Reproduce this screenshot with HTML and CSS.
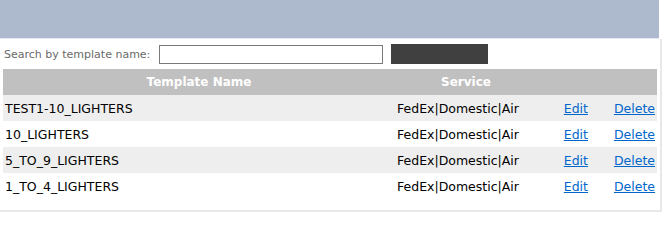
FILE: index.html
```html
<!DOCTYPE html>
<html>
<head>
<meta charset="utf-8">
<link rel="stylesheet" href="styles.css">
</head>
<body>
<div class="topbar"></div>
<div class="panel">
  <div class="search">
    <label class="search-label" for="q">Search by template name:</label>
    <input class="search-input" id="q" type="text">
    <button class="search-btn" type="button"></button>
  </div>
  <table class="grid">
    <thead>
      <tr>
        <th class="c-name">Template Name</th>
        <th class="c-svc">Service</th>
        <th class="c-edit"></th>
        <th class="c-del"></th>
      </tr>
    </thead>
    <tbody>
      <tr class="alt"><td>TEST1-10_LIGHTERS</td><td>FedEx|Domestic|Air</td><td class="c-edit"><a href="#">Edit</a></td><td class="c-del"><a href="#">Delete</a></td></tr>
      <tr><td>10_LIGHTERS</td><td>FedEx|Domestic|Air</td><td class="c-edit"><a href="#">Edit</a></td><td class="c-del"><a href="#">Delete</a></td></tr>
      <tr class="alt"><td>5_TO_9_LIGHTERS</td><td>FedEx|Domestic|Air</td><td class="c-edit"><a href="#">Edit</a></td><td class="c-del"><a href="#">Delete</a></td></tr>
      <tr><td>1_TO_4_LIGHTERS</td><td>FedEx|Domestic|Air</td><td class="c-edit"><a href="#">Edit</a></td><td class="c-del"><a href="#">Delete</a></td></tr>
    </tbody>
  </table>
</div>
</body>
</html>
```

FILE: styles.css
```css
html, body {
  margin: 0;
  padding: 0;
  background: #ffffff;
}
body {
  font-family: "DejaVu Sans", sans-serif;
  width: 665px;
  height: 212px;
  overflow: hidden;
}
.topbar {
  width: 659px;
  height: 38px;
  background: #adbacd;
  border-bottom: 1px solid #e3e7ee;
}
.panel {
  width: 660px;
  height: 171px;
  border-right: 2px solid #e8e8e8;
  border-bottom: 2px solid #e8e8e8;
  box-sizing: content-box;
}
.search {
  display: flex;
  align-items: center;
  height: 20px;
  padding: 5px 0 0 4px;
}
.search-label {
  font-size: 11px;
  color: #6a6a6a;
  width: 155px;
  white-space: nowrap;
}
.search-input {
  box-sizing: border-box;
  width: 224px;
  height: 19px;
  margin: 0;
  padding: 0;
  border: 1px solid #7a7a7a;
  background: #fff;
}
.search-btn {
  box-sizing: border-box;
  width: 97px;
  height: 20px;
  margin: 0 0 0 8px;
  padding: 0;
  border: none;
  background: #404040;
}
.grid {
  margin: 5px 0 0 3px;
  width: 654px;
  border-collapse: collapse;
  table-layout: fixed;
  font-size: 12.5px;
}
.grid th {
  height: 26px;
  padding: 0;
  background: #c0c0c0;
  color: #ffffff;
  font-weight: bold;
  font-size: 12px;
  text-align: center;
}
.grid td {
  height: 26px;
  padding: 0 2px;
  color: #000;
  white-space: nowrap;
}
.grid tr.alt td {
  background: #eeeeee;
}
.c-name { width: 392px; }
.c-svc { width: 142px; }
.c-edit { width: 53px; }
.c-del { width: 67px; }
td.c-edit, td.c-del { text-align: right; }
.grid a {
  color: #0066cc;
  text-decoration: underline;
}
```
